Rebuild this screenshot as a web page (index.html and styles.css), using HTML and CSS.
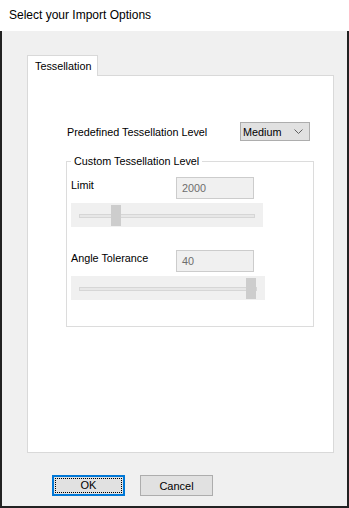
FILE: index.html
```html
<!DOCTYPE html>
<html lang="en">
<head>
    <meta charset="UTF-8">
    <title>Select your Import Options</title>
    <link rel="stylesheet" href="styles.css">
</head>
<body>

<div class="window">
    <div class="titlebar">Select your Import Options</div>

    <div class="client">
        <div class="tabs">
            <div class="tab">Tessellation</div>
        </div>

        <div class="panel">
            <div class="predef">
                <span class="predef-label">Predefined Tessellation Level</span>
                <div class="combo">
                    <span>Medium</span>
                    <svg class="chevron" width="9" height="5" viewBox="0 0 9 5"><path d="M0.5 0.5 L4.5 4.5 L8.5 0.5" fill="none" stroke="#606060" stroke-width="1"/></svg>
                </div>
            </div>

            <div class="group">
                <div class="group-title">Custom Tessellation Level</div>

                <div class="field">
                    <span class="field-label">Limit</span>
                    <div class="textbox">2000</div>
                </div>
                <div class="slider">
                    <div class="track"></div>
                    <div class="thumb thumb-limit"></div>
                </div>

                <div class="field field-angle">
                    <span class="field-label">Angle Tolerance</span>
                    <div class="textbox">40</div>
                </div>
                <div class="slider slider-wide">
                    <div class="track"></div>
                    <div class="thumb thumb-angle"></div>
                </div>
            </div>
        </div>

        <div class="buttons">
            <button class="btn btn-default"><span>OK</span></button>
            <button class="btn">Cancel</button>
        </div>
    </div>
</div>

</body>
</html>
```

FILE: styles.css
```css
* { box-sizing: border-box; }
body { margin: 0; font-family: "Liberation Sans", Arial, sans-serif; font-size: 10.8px; color: #000; background: #fff; }
.window { width: 349px; height: 508px; display: flex; flex-direction: column; }
.titlebar { height: 31px; line-height: 30px; padding-left: 9px; background: #fff; font-size: 12px; color: #000; }
.client { flex: 1; background: #f0f0f0; border: 2px solid #222; border-top: none; padding: 24px 13px 0 25px; }

.tabs { display: flex; }
.tab { width: 71px; height: 21px; line-height: 20px; padding-left: 7px; background: #fff; border: 1px solid #d9d9d9; border-bottom: none; margin-bottom: -1px; position: relative; z-index: 1; }
.panel { height: 378px; background: #fff; border: 1px solid #d9d9d9; padding: 46px 0 0 39px; }

.predef { display: flex; align-items: center; height: 19px; }
.predef-label { width: 173px; }
.combo { width: 70px; height: 19px; border: 1px solid #adadad; background: #e1e1e1; display: flex; align-items: center; justify-content: space-between; padding: 0 6px 0 2px; }
.chevron { display: block; }

.group { width: 248px; height: 166px; margin: 20px 0 0 -1px; border: 1px solid #dcdcdc; padding: 0 0 0 4px; }
.group-title { display: table; margin: -9px 0 0 0; padding: 0 3px; background: #fff; line-height: 16px; }

.field { display: flex; align-items: flex-start; margin-top: 8px; }
.field-angle { margin-top: 23px; }
.field-label { width: 105px; line-height: 16px; }
.textbox { width: 78px; height: 22px; line-height: 20px; border: 1px solid #ccc; background: #f0f0f0; color: #6d6d6d; padding-left: 5px; }

.slider { position: relative; width: 192px; height: 24px; margin-top: 4px; background: #f0f0f0; }
.slider-wide { width: 194px; }
.track { position: absolute; left: 8px; top: 11px; width: 176px; height: 4px; border: 1px solid #d6d6d6; background: #e7e7e7; }
.slider-wide .track { width: 178px; }
.thumb { position: absolute; top: 2px; width: 10px; height: 21px; background: #cdcdcd; }
.thumb-limit { left: 40px; }
.thumb-angle { left: 175px; }

.buttons { display: flex; gap: 15px; margin: 22px 0 0 25px; }
.btn { width: 73px; height: 21px; padding: 0; border: 1px solid #adadad; background: #e1e1e1; font-family: inherit; font-size: 11px; color: #000; }
.btn-default { border: 2px solid #0078d7; padding: 1px; }
.btn-default span { display: block; height: 100%; border: 1px dotted #000; line-height: 13px; }
```
